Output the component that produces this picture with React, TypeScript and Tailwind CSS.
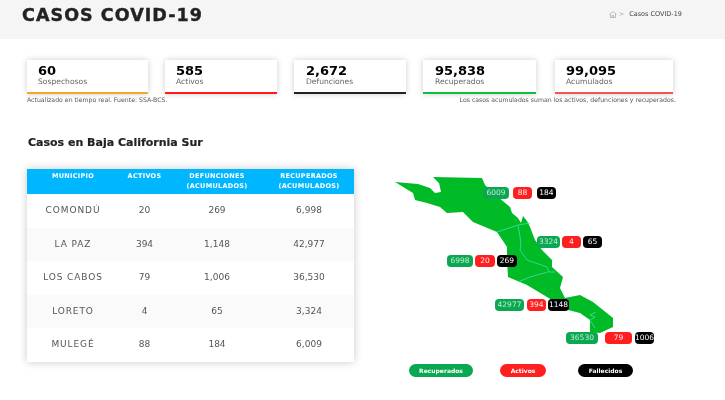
const font = "font-['DejaVu_Sans',sans-serif]";

const cards = [
  { value: "60", label: "Sospechosos", width: "w-[121px] mr-[17px]", bar: "bg-[#f5a623]", pad: "pl-[11px]" },
  { value: "585", label: "Activos", width: "w-[112px] mr-[17px]", bar: "bg-[#ff1a1a]", pad: "pl-[11px]" },
  { value: "2,672", label: "Defunciones", width: "w-[112px] mr-[17px]", bar: "bg-[#222222]", pad: "pl-[12px]" },
  { value: "95,838", label: "Recuperados", width: "w-[113px] mr-[19px]", bar: "bg-[#0fbf3c]", pad: "pl-[12px]" },
  { value: "99,095", label: "Acumulados", width: "w-[118px]", bar: "bg-[#f25555]", pad: "pl-[11px]" },
];

const rows = [
  ["COMONDÚ", "20", "269", "6,998"],
  ["LA PAZ", "394", "1,148", "42,977"],
  ["LOS CABOS", "79", "1,006", "36,530"],
  ["LORETO", "4", "65", "3,324"],
  ["MULEGÉ", "88", "184", "6,009"],
];

const green = "bg-[#0aa850] text-white/75";
const red = "bg-[#ff1f1f] text-white/90";
const black = "bg-black text-white";

const pills = [
  { text: "6009", cls: `left-[98px] top-[18px] w-[26px] ${green}` },
  { text: "88", cls: `left-[128px] top-[18px] w-[19px] ${red}` },
  { text: "184", cls: `left-[152px] top-[18px] w-[19px] ${black}` },
  { text: "3324", cls: `left-[152px] top-[67px] w-[23px] ${green}` },
  { text: "4", cls: `left-[177px] top-[67px] w-[19px] ${red}` },
  { text: "65", cls: `left-[198px] top-[67px] w-[19px] ${black}` },
  { text: "6998", cls: `left-[62px] top-[86px] w-[26px] ${green}` },
  { text: "20", cls: `left-[90px] top-[86px] w-[20px] ${red}` },
  { text: "269", cls: `left-[112px] top-[86px] w-[20px] ${black}` },
  { text: "42977", cls: `left-[110px] top-[130px] w-[29px] ${green}` },
  { text: "394", cls: `left-[142px] top-[130px] w-[19px] ${red}` },
  { text: "1148", cls: `left-[163px] top-[130px] w-[21px] ${black}` },
  { text: "36530", cls: `left-[181px] top-[163px] w-[32px] ${green}` },
  { text: "79", cls: `left-[220px] top-[163px] w-[27px] ${red}` },
  { text: "1006", cls: `left-[250px] top-[163px] w-[19px] ${black}` },
];

function BajaMap() {
  return (
    <svg className="absolute left-0 top-0" width="300" height="180" viewBox="385 169 300 180">
      <path
        fill="#00bb26"
        d="M395 182 L418 184 L430 188 L435 193 L441 192 L439 183 L433 177 L482 178 L485 185 L498 197 L510 207 L512 213 L518 218 L521 223 L523 216 L527 221 L530 227 L535 240 L542 250 L552 260 L552 267 L563 277 L560 288 L565 298 L580 295 L593 302 L603 310 L613 318 L613 327 L600 333 L590 332 L590 320 L580 313 L568 310 L547 297 L527 285 L508 277 L507 260 L507 247 L497 232 L473 222 L463 212 L447 213 L440 207 L427 203 L415 200 L413 193 Z"
      />
      <path
        fill="none"
        stroke="#3fe0a8"
        strokeWidth="0.8"
        d="M497 232 L518 225 L530 223 M518 225 L521 243 L520 250 L527 260 L547 267 L549 272 L555 272 M518 282 L530 277 L548 272 M596 312 L590 315 L595 317 L590 320 L595 328"
      />
    </svg>
  );
}

export default function App() {
  return (
    <div className={`${font} w-[725px] h-[400px] overflow-hidden bg-white text-[#333] blur-[0.3px]`}>
      <header className="h-[39px] bg-[#f5f5f5] flex items-center justify-between pl-[22px] pr-[43px]">
        <h1 className="text-[17.5px] font-bold leading-none text-[#222] tracking-[1.05px] -mt-[8px] [-webkit-text-stroke:0.4px_#222]">CASOS COVID-19</h1>
        <div className="flex items-center gap-[2px] text-[6.5px] -mt-[10px]">
          <svg width="8" height="7" viewBox="0 0 16 14" fill="none" stroke="#999" strokeWidth="1.2">
            <path d="M1 7 L8 1 L15 7 M3 6 V13 H13 V6 M6.5 13 V9 H9.5 V13" />
          </svg>
          <span className="text-[#aaa]">&gt;</span>
          <span className="text-[#444] ml-[3px]">Casos COVID-19</span>
        </div>
      </header>

      <section className="pl-[27px] pt-[21px]">
        <div className="flex">
          {cards.map((c) => (
            <div
              key={c.label}
              className={`${c.width} h-[34px] bg-white shadow-[0_0_6px_rgba(0,0,0,0.2)] flex flex-col`}
            >
              <div className={`${c.pad} flex-1 pt-[4px]`}>
                <div className="text-[13px] font-bold leading-[13px] text-black">{c.value}</div>
                <div className="text-[7.6px] leading-[9px] text-[#666]">{c.label}</div>
              </div>
              <div className={`h-[2px] ${c.bar}`} />
            </div>
          ))}
        </div>
        <div className="flex justify-between w-[649px] mt-[2px] text-[6.2px] leading-[8px] text-[#555]">
          <span>Actualizado en tiempo real. Fuente: SSA-BCS.</span>
          <span>Los casos acumulados suman los activos, defunciones y recuperados.</span>
        </div>
        <h2 className="mt-[32px] ml-[1px] text-[11px] leading-[14px] font-bold text-[#222] [-webkit-text-stroke:0.2px_#222]">Casos en Baja California Sur</h2>

        <div className="flex mt-[19px]">
          <div className="w-[327px] h-[193px] shadow-[0_0_8px_rgba(0,0,0,0.22)] bg-white">
            <div className="h-[25px] bg-[#00b7ff] grid grid-cols-[92px_51px_94px_90px] pt-[2px] text-white text-[6.5px] tracking-[0.3px] font-bold leading-[10px] text-center">
              <div>MUNICIPIO</div>
              <div>ACTIVOS</div>
              <div>DEFUNCIONES<br />(ACUMULADOS)</div>
              <div>RECUPERADOS<br />(ACUMULADOS)</div>
            </div>
            {rows.map((r, i) => (
              <div
                key={r[0]}
                className={`h-[33.6px] grid grid-cols-[92px_51px_94px_90px] items-center text-center text-[9px] text-[#555] ${
                  i % 2 === 1 ? "bg-[#fafafa]" : "bg-white"
                }`}
              >
                <div className="tracking-[0.9px] whitespace-nowrap">{r[0]}</div>
                <div>{r[1]}</div>
                <div>{r[2]}</div>
                <div>{r[3]}</div>
              </div>
            ))}
          </div>

          <div className="relative flex-1 h-[230px] ml-[31px]">
            <BajaMap />
            {pills.map((p) => (
              <div
                key={p.text}
                className={`absolute h-[12px] rounded-[4px] text-[7.5px] leading-[12px] text-center whitespace-nowrap ${p.cls}`}
              >
                {p.text}
              </div>
            ))}
            <div className="absolute left-[24px] top-[195px] flex text-white text-[6px] font-bold text-center leading-[13px]">
              <div className="w-[64px] h-[13px] rounded-full bg-[#0aa850]">Recuperados</div>
              <div className="w-[46px] h-[13px] rounded-full bg-[#ff1f1f] ml-[27px]">Activos</div>
              <div className="w-[55px] h-[13px] rounded-full bg-black ml-[32px]">Fallecidos</div>
            </div>
          </div>
        </div>
      </section>
    </div>
  );
}
